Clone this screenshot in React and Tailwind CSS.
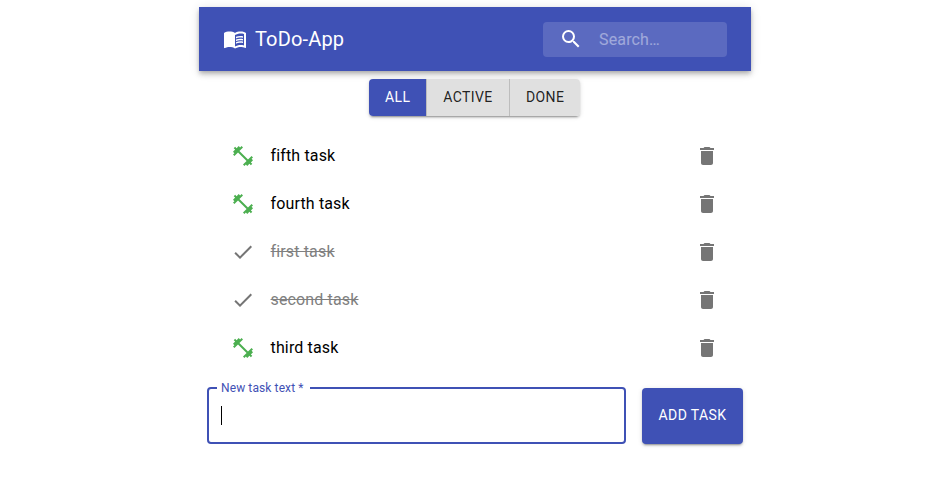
import { MdMenuBook, MdSearch, MdFitnessCenter, MdDone, MdDelete } from "react-icons/md";

const tasks = [
  { text: "fifth task", done: false },
  { text: "fourth task", done: false },
  { text: "first task", done: true },
  { text: "second task", done: true },
  { text: "third task", done: false },
];

function Header() {
  return (
    <header className="flex h-16 items-center justify-between bg-[#3f51b5] px-6 text-white shadow-[0_2px_4px_-1px_rgba(0,0,0,0.2),0_4px_5px_0_rgba(0,0,0,0.14),0_1px_10px_0_rgba(0,0,0,0.12)]">
      <div className="flex items-center gap-2">
        <MdMenuBook className="size-6" />
        <h1 className="text-xl leading-8 tracking-[0.15px]">ToDo-App</h1>
      </div>
      <label className="flex h-[35px] w-[184px] items-center rounded bg-white/15 pl-4">
        <MdSearch className="size-6" />
        <input
          className="ml-4 w-28 bg-transparent pt-[2px] text-base tracking-[0.15px] text-white outline-none placeholder:text-white/42"
          placeholder="Search…"
        />
      </label>
    </header>
  );
}

function Filters() {
  const base = "h-[37px] px-4 pb-[2px] text-sm leading-6 tracking-[0.4px]";
  return (
    <div className="mt-2 ml-[170px] flex w-fit overflow-hidden rounded shadow-[0_3px_1px_-2px_rgba(0,0,0,0.2),0_2px_2px_0_rgba(0,0,0,0.14),0_1px_5px_0_rgba(0,0,0,0.12)]">
      <button className={`${base} w-[58px] border-r border-[#bdbdbd] bg-[#3f51b5] text-white`}>ALL</button>
      <button className={`${base} w-[83px] border-r border-[#bdbdbd] bg-[#e0e0e0] text-black/87`}>ACTIVE</button>
      <button className={`${base} w-[70px] bg-[#e0e0e0] text-black/87`}>DONE</button>
    </div>
  );
}

function TaskRow({ task }) {
  return (
    <li className="flex h-12 items-center pr-8 pl-8">
      {task.done ? (
        <MdDone className="size-6 text-[#757575]" />
      ) : (
        <MdFitnessCenter className="size-6 text-[#4caf50]" />
      )}
      <span
        className={
          task.done
            ? "ml-[15.5px] flex-1 text-base tracking-[0.15px] text-[#808080] line-through"
            : "ml-[15.5px] flex-1 text-base tracking-[0.15px] text-black"
        }
      >
        {task.text}
      </span>
      <MdDelete className="size-6 text-[#757575]" />
    </li>
  );
}

function NewTask() {
  return (
    <form className="mt-[15px] flex items-end gap-4 px-2">
      <div className="relative h-[57px] w-[419px] rounded border-2 border-[#3f51b5]">
        <span className="absolute -top-[9px] left-2 w-[93px] bg-white pl-1 text-xs leading-4 tracking-[0.11px] whitespace-nowrap text-[#3f51b5]">
          New task text *
        </span>
        <span className="absolute top-[17px] left-3 h-[19px] w-px bg-black" />
      </div>
      <button
        type="button"
        className="h-14 w-[101px] rounded bg-[#3f51b5] pb-[2px] text-sm tracking-[0.4px] text-white shadow-[0_3px_1px_-2px_rgba(0,0,0,0.2),0_2px_2px_0_rgba(0,0,0,0.14),0_1px_5px_0_rgba(0,0,0,0.12)]"
      >
        ADD TASK
      </button>
    </form>
  );
}

export default function App() {
  return (
    <div className="min-h-screen bg-white pt-[7px] font-['Roboto',sans-serif]">
      <main className="ml-[199px] w-[552px]">
        <Header />
        <Filters />
        <ul className="mt-4">
          {tasks.map((task) => (
            <TaskRow key={task.text} task={task} />
          ))}
        </ul>
        <NewTask />
      </main>
    </div>
  );
}
